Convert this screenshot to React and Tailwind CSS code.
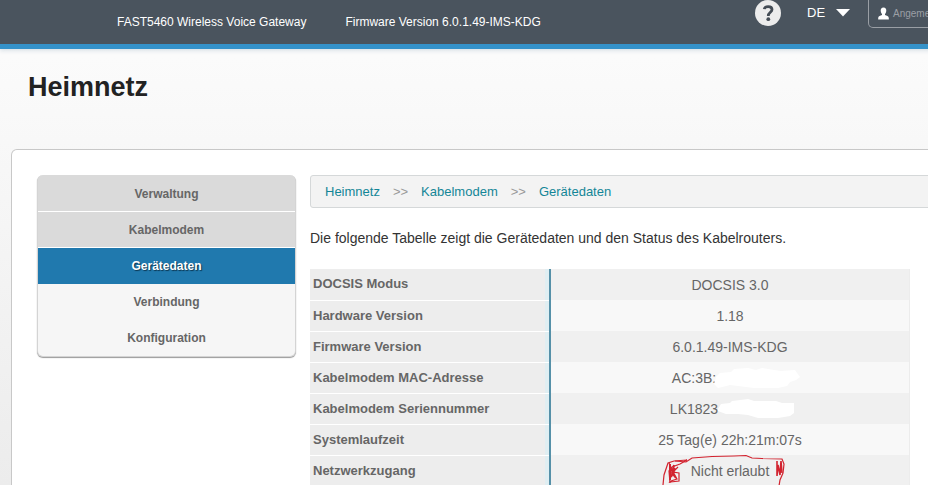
const menuItems = [
    { label: "Verwaltung", style: "border-b border-white bg-[#dadada] text-[#666]" },
    { label: "Kabelmodem", style: "border-b border-white bg-[#dadada] text-[#666]" },
    {
        label: "Gerätedaten",
        active: true,
        style: "bg-[#2079ae] text-white [text-shadow:1px_1px_1px_#0b3550]",
    },
    { label: "Verbindung", style: "bg-[#f6f6f6] text-[#666]" },
    { label: "Konfiguration", style: "bg-[#f6f6f6] text-[#666]" },
];

const breadcrumbs = ["Heimnetz", "Kabelmodem", "Gerätedaten"];

const rows = [
    { name: "DOCSIS Modus", value: "DOCSIS 3.0" },
    { name: "Hardware Version", value: "1.18" },
    { name: "Firmware Version", value: "6.0.1.49-IMS-KDG" },
    {
        name: "Kabelmodem MAC-Adresse",
        value: "AC:3B:",
        blot: "M0 9 L4 5 L15 4 L18 1 L32 0 L40 2 L46 0 L58 2 L65 3 L79 2 L81 5 L84 9 L80 12 L74 14 L71 18 L62 20 L38 20 L22 18 L14 17 L2 20 L-2 16 Z",
    },
    {
        name: "Kabelmodem Seriennummer",
        value: "LK1823",
        blot: "M0 10 L3 5 L12 4 L14 2 L30 0 L36 2 L58 2 L64 4 L76 4 L76 14 L72 17 L60 19 L40 19 L30 16 L20 15 L8 15 L0 12 Z",
    },
    { name: "Systemlaufzeit", value: "25 Tag(e) 22h:21m:07s" },
    { name: "Netzwerkzugang", value: "Nicht erlaubt", marked: true },
];

function Header() {
    return (
        <header className="flex h-[49px] shrink-0 items-start border-b-[5px] border-[#3592c9] bg-[#4a545e] pl-[117px] pr-[22px] text-white shadow-[0_2px_4px_#dce3e8]">
            <p className="pt-[14px] text-xs">FAST5460 Wireless Voice Gateway</p>
            <p className="pl-[39px] pt-[14px] text-xs">Firmware Version 6.0.1.49-IMS-KDG</p>

            <div className="ml-auto flex items-start">
                <button type="button" aria-label="Hilfe">
                    <svg width="26" height="26" viewBox="0 0 26 26" className="block">
                        <circle cx="13" cy="13" r="13" fill="#ececec" />
                        <path
                            d="M9.3 9.2 C9.6 6.8 11.4 6.6 13.2 6.6 C15.6 6.6 17 7.8 17 9.6 C17 12.4 13.3 12.3 13.3 16"
                            fill="none"
                            stroke="#444c55"
                            strokeWidth="2.8"
                        />
                        <circle cx="13.3" cy="19.2" r="1.9" fill="#444c55" />
                    </svg>
                </button>

                <div className="relative ml-[26px] mt-[3px]">
                    <select
                        aria-label="Sprache"
                        className="block w-[43px] appearance-none bg-transparent text-[13px] leading-5 outline-none"
                    >
                        <option>DE</option>
                    </select>
                    <svg
                        width="14"
                        height="8"
                        viewBox="0 0 14 8"
                        className="pointer-events-none absolute right-0 top-[6px]"
                    >
                        <path d="M0 0 H14 L7 7.5 Z" fill="#fff" />
                    </svg>
                </div>

                <button
                    type="button"
                    className="ml-[18px] flex h-[28px] w-[110px] items-center gap-[4px] rounded-b-[5px] border border-t-0 border-[#9a9fa5] pl-[9px] text-[10px] text-[#9a9fa5]"
                >
                    <svg width="11" height="13" viewBox="0 0 11 13" className="shrink-0">
                        <path
                            d="M5.5 0.5 C7.5 0.5 8.4 2 8.3 3.8 C8.2 5.4 7.6 6.5 7 7 V8 C8.5 8.8 10.8 9 10.8 11 V12.5 H0.2 V11 C0.2 9 2.5 8.8 4 8 V7 C3.4 6.5 2.8 5.4 2.7 3.8 C2.6 2 3.5 0.5 5.5 0.5 Z"
                            fill="#fff"
                        />
                    </svg>
                    <span>Angeme</span>
                </button>
            </div>
        </header>
    );
}

function SideMenu() {
    return (
        <nav className="w-[259px] shrink-0 self-start overflow-hidden rounded-[6px] border border-t-0 border-[#d4d4d4] bg-[#dadada] pt-px shadow-[0_1px_1px_#999]">
            {menuItems.map((item) => (
                <a
                    key={item.label}
                    href="#"
                    aria-current={item.active ? "page" : undefined}
                    className={`flex h-[36px] items-center justify-center text-xs font-bold ${item.style}`}
                >
                    {item.label}
                </a>
            ))}
        </nav>
    );
}

function Breadcrumbs() {
    return (
        <nav className="flex h-[33px] items-center gap-[13px] rounded-[3px] border border-[#d5d8d9] bg-[#f3f3f3] px-[14px] text-[13px]">
            {breadcrumbs.map((crumb, i) => (
                <span key={crumb} className="flex items-center gap-[13px]">
                    {i > 0 && <span className="text-[#999]">&gt;&gt;</span>}
                    <a href="#" className="text-[#138697]">
                        {crumb}
                    </a>
                </span>
            ))}
        </nav>
    );
}

function PenMark() {
    return (
        <svg
            width="124"
            height="32"
            viewBox="0 0 124 32"
            className="pointer-events-none absolute -left-[29px] -top-[6px] overflow-visible"
            fill="none"
            stroke="#d2232f"
            strokeWidth="1.2"
        >
            <path d="M1 30 L2 20 L6 8 L12 6 L25 5 L18 9 L10 12 L7 16 L8 28" />
            <path d="M13 6 L24 7 L30 3 L50 1.5 L72 1 L84 0.5 L90 3 L100 3.5 L120 4 L122 9 L121 18 L118 25 L117 31" />
            <path d="M7 8 L12 20 L15 24 L9 26 L8 27 L17 26 L17 18 L11 17 L16 12" />
            <path d="M8 9 L8 25 M12 10 L10 18 L14 23 L9 14 M13 13 L9 22" strokeWidth="2" />
            <path d="M115 6 L115 21 L116 10 L118 20 L119 6 L120 18" strokeWidth="1.6" />
        </svg>
    );
}

function DeviceTable() {
    return (
        <table className="w-[600px] border-collapse">
            <tbody>
                {rows.map((row) => (
                    <tr key={row.name} className="group h-[31px]">
                        <th
                            scope="row"
                            className="w-[240px] border-b border-r-2 border-b-white border-r-[#5590a8] bg-[#ededed] pl-[3px] text-left text-[13px] leading-5 text-[#666] shadow-[inset_-4px_0_0_#e0eef2]"
                        >
                            {row.name}
                        </th>
                        <td className="border-r border-[#ececec] bg-[#f8f8f8] text-center text-sm text-[#666] group-odd:bg-[#f0f0f0]">
                            <span className="relative inline-flex items-center">
                                {row.value}
                                {row.blot && (
                                    <svg width="72" height="20" viewBox="0 0 72 20" className="overflow-visible">
                                        <path d={row.blot} fill="#fff" />
                                    </svg>
                                )}
                                {row.marked && <PenMark />}
                            </span>
                        </td>
                    </tr>
                ))}
            </tbody>
        </table>
    );
}

export default function App() {
    return (
        <div className="h-screen overflow-hidden bg-[#ededed] font-['Liberation_Sans',Arial,sans-serif]">
            <div className="flex h-full min-w-[1000px] flex-col bg-linear-to-b from-[#fdfdfd] to-[#ececec]">
                <Header />
                <h1 className="px-[28px] pt-[20px] text-[27px] font-bold leading-9 text-[#222]">Heimnetz</h1>

                <main className="mx-[11px] mt-[44px] flex flex-1 items-start gap-[14px] rounded-t-[6px] border border-b-0 border-[#c8c8c8] bg-white px-[25px] pt-[25px]">
                    <SideMenu />
                    <section className="min-w-0 flex-1">
                        <Breadcrumbs />
                        <p className="pb-[21px] pt-[20px] text-sm text-[#333]">
                            Die folgende Tabelle zeigt die Gerätedaten und den Status des Kabelrouters.
                        </p>
                        <DeviceTable />
                    </section>
                </main>
            </div>
        </div>
    );
}
